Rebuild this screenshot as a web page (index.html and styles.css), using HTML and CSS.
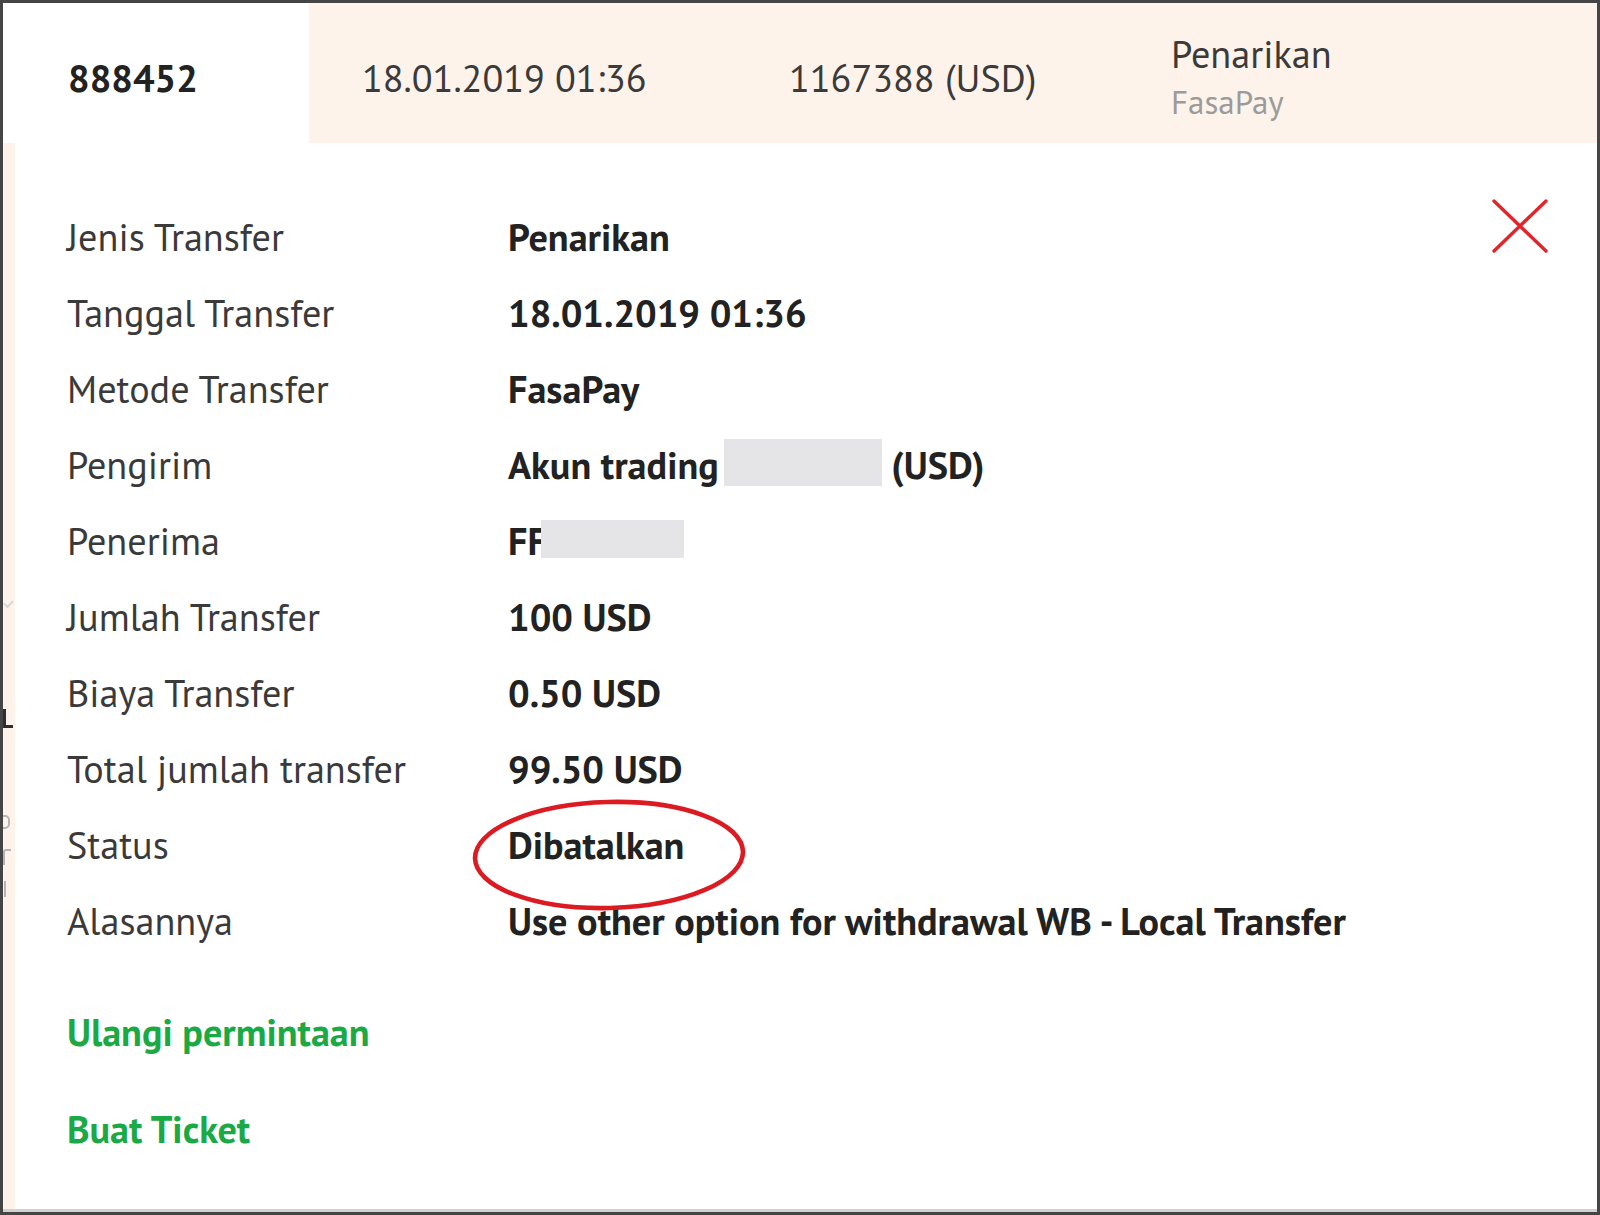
FILE: index.html
```html
<!DOCTYPE html>
<html lang="id">
<head>
<meta charset="utf-8">
<title>Detail Transfer</title>
<link rel="stylesheet" href="styles.css">
</head>
<body>
<div class="frame">
  <div class="inner">
    <div class="head">
      <div class="cell cell-id">888452</div>
      <div class="cell cell-peach">18.01.2019 01:36</div>
      <div class="cell cell-peach">1167388 (USD)</div>
      <div class="cell cell-peach cell-type">
        <span class="type-main">Penarikan</span>
        <span class="type-sub">FasaPay</span>
      </div>
    </div>
    <div class="main">
      <div class="strip" aria-hidden="true">
        <i class="frag frag-check"></i>
        <i class="frag frag-l"></i>
        <i class="frag frag-p"></i>
        <i class="frag frag-r"></i>
        <i class="frag frag-k"></i>
      </div>
      <div class="panel">
        <button class="close" aria-label="Tutup">
          <svg width="56" height="54" viewBox="0 0 56 54"><path d="M2 2 L54 52 M54 2 L2 52" stroke="#e3242b" stroke-width="3.4" stroke-linecap="round" fill="none"/></svg>
        </button>
        <dl class="details">
          <dt>Jenis Transfer</dt><dd>Penarikan</dd>
          <dt>Tanggal Transfer</dt><dd>18.01.2019 01:36</dd>
          <dt>Metode Transfer</dt><dd>FasaPay</dd>
          <dt>Pengirim</dt><dd>Akun trading<span class="redact redact-acc"></span> (USD)</dd>
          <dt>Penerima</dt><dd class="rel">FF<span class="redact redact-recv"></span></dd>
          <dt>Jumlah Transfer</dt><dd>100 USD</dd>
          <dt>Biaya Transfer</dt><dd>0.50 USD</dd>
          <dt>Total jumlah transfer</dt><dd>99.50 USD</dd>
          <dt>Status</dt><dd>Dibatalkan</dd>
          <dt>Alasannya</dt><dd>Use other option for withdrawal WB - Local Transfer</dd>
        </dl>
        <svg class="circle" width="278" height="116" viewBox="0 0 278 116"><ellipse cx="139" cy="58" rx="134" ry="53" fill="none" stroke="#dc1a22" stroke-width="4.6" transform="rotate(-1.5 139 58)"/></svg>
        <div class="links">
          <a class="link link-repeat" href="#">Ulangi permintaan</a>
          <a class="link link-ticket" href="#">Buat Ticket</a>
        </div>
      </div>
    </div>
  </div>
</div>
</body>
</html>
```
FILE: styles.css
```css
html, body {
  margin: 0;
  padding: 0;
  background: #ffffff;
}

.frame {
  width: 1600px;
  height: 1215px;
  box-sizing: border-box;
  border: 3px solid #454545;
  background: #ffffff;
  font-family: "PT Sans", "Fira Sans Condensed", "Roboto Condensed", sans-serif;
  font-size: 38.2px;
  color: #333333;
}

.inner {
  height: 100%;
  box-sizing: border-box;
  border-bottom: 3px solid #d2d2d2;
  display: flex;
  flex-direction: column;
}

/* header row */
.head {
  display: grid;
  grid-template-columns: 306px 427px 382px 1fr;
  height: 140px;
  flex: none;
}

.cell {
  display: flex;
  flex-direction: column;
  justify-content: center;
  padding: 10px 0 0 53px;
  line-height: 48px;
  white-space: nowrap;
  color: #3a3a3a;
}

.cell-id {
  padding-left: 65px;
  font-weight: 700;
  color: #222222;
  background: #ffffff;
}

.cell-peach {
  background: #fdf3ea;
}

.type-main {
  display: block;
}

.type-sub {
  display: block;
  font-size: 33px;
  color: #9b9b9b;
}

/* body */
.main {
  flex: 1;
  display: flex;
  min-height: 0;
}

.strip {
  width: 12px;
  flex: none;
  background: #fdf3ea;
  position: relative;
  overflow: hidden;
}

.frag {
  position: absolute;
  display: block;
}

.frag-check {
  top: 457px;
  left: 1px;
  width: 7px;
  height: 4px;
  border-left: 2px solid #d6d6d6;
  border-bottom: 2px solid #d6d6d6;
  transform: rotate(-45deg);
}

.frag-l {
  top: 566px;
  left: 0;
  width: 7px;
  height: 16px;
  border-left: 3px solid #2e2e2e;
  border-bottom: 3px solid #2e2e2e;
}

.frag-p {
  top: 672px;
  left: -5px;
  width: 8px;
  height: 10px;
  border: 2px solid #b5b5b5;
  border-radius: 5px;
}

.frag-r {
  top: 706px;
  left: 0;
  width: 6px;
  height: 14px;
  border-left: 2px solid #b5b5b5;
  border-top: 2px solid #b5b5b5;
  border-radius: 3px 0 0 0;
}

.frag-k {
  top: 738px;
  left: 1px;
  width: 6px;
  height: 16px;
  border-left: 2px solid #b5b5b5;
}

.panel {
  flex: 1;
  position: relative;
  background: #ffffff;
  padding: 56px 0 0 52px;
}

.close {
  position: absolute;
  top: 56px;
  right: 49px;
  width: 56px;
  height: 54px;
  padding: 0;
  border: 0;
  background: transparent;
  cursor: pointer;
}

.close svg {
  display: block;
}

.details {
  display: grid;
  grid-template-columns: 441px 1fr;
  margin: 0;
  line-height: 76px;
}

.details dt {
  color: #3a3a3a;
  white-space: nowrap;
}

.details dd {
  margin: 0;
  font-weight: 700;
  color: #222222;
  white-space: nowrap;
}

.rel {
  position: relative;
}

.redact {
  background: #e5e5e7;
}

.redact-acc {
  display: inline-block;
  width: 158px;
  height: 47px;
  margin-left: 5px;
  vertical-align: -7px;
}

.redact-recv {
  position: absolute;
  left: 33px;
  top: 17px;
  width: 143px;
  height: 38px;
}

.circle {
  position: absolute;
  left: 455px;
  top: 654px;
}

.links {
  display: flex;
  flex-direction: column;
  align-items: flex-start;
  gap: 21px;
  margin-top: 35px;
}

.link {
  font-weight: 700;
  line-height: 76px;
  color: #1aa944;
  text-decoration: none;
}
```
